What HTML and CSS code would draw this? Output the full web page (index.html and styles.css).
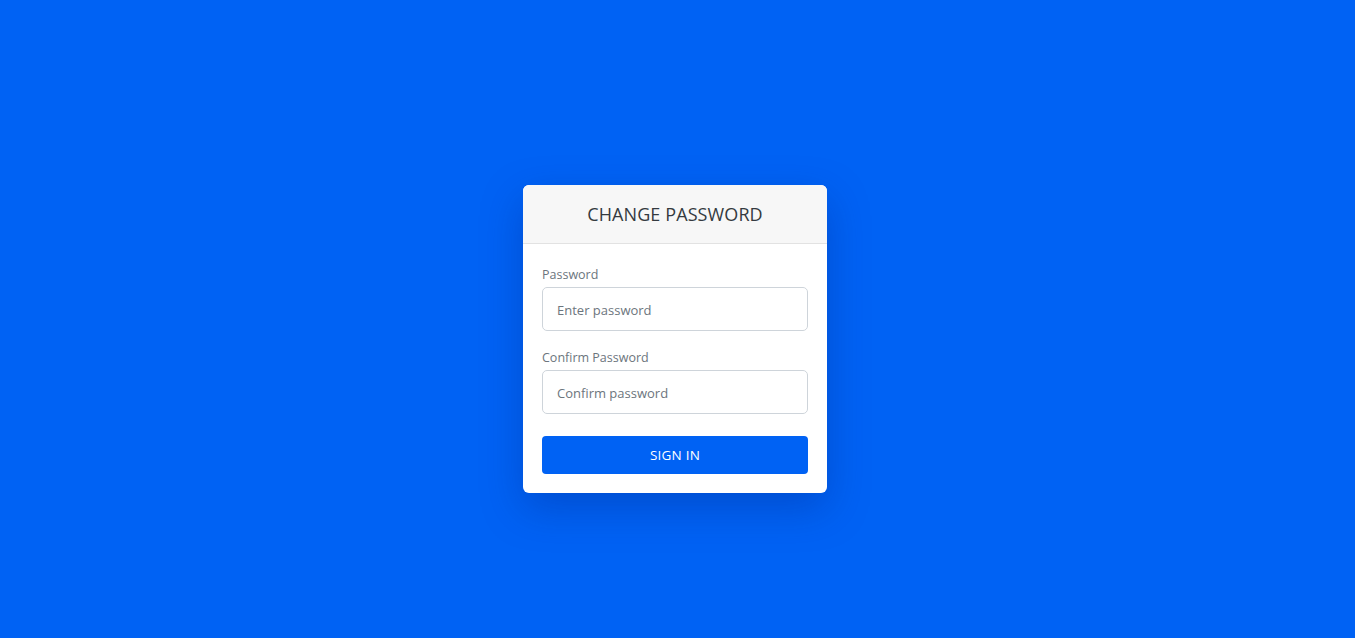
FILE: index.html
```html
<!DOCTYPE html>
<html lang="en">
<head>
<meta charset="utf-8">
<title>Change Password</title>
<link rel="stylesheet" href="styles.css">
</head>
<body>
<main class="page">
  <div class="card">
    <div class="card-header">CHANGE PASSWORD</div>
    <form class="card-body">
      <div class="form-group">
        <label class="form-label" for="pw">Password</label>
        <input class="form-input" id="pw" type="password" placeholder="Enter password">
      </div>
      <div class="form-group">
        <label class="form-label" for="cpw">Confirm Password</label>
        <input class="form-input" id="cpw" type="password" placeholder="Confirm password">
      </div>
      <button class="btn" type="button">SIGN IN</button>
    </form>
  </div>
</main>
</body>
</html>
```
FILE: styles.css
```css
* { box-sizing: border-box; }
html, body { margin: 0; height: 100%; }
body {
  background: #0062f4;
  font-family: "Open Sans", "Noto Sans", sans-serif;
  color: #343a40;
}
.page {
  height: 100%;
  display: flex;
  align-items: center;
  justify-content: center;
}
.card {
  width: 304px;
  height: 308px;
  background: #fff;
  border-radius: 6px;
  overflow: hidden;
  box-shadow: 0 15px 40px rgba(0, 40, 140, 0.35);
  margin: 40px 5px 0 0;
}
.card-header {
  height: 59px;
  background: #f7f7f7;
  border-bottom: 1px solid #e2e2e2;
  display: flex;
  align-items: center;
  justify-content: center;
  font-size: 18px;
  letter-spacing: 0.1px;
  color: #343a40;
  padding-bottom: 1px;
}
.card-body {
  padding: 21px 19px 19px;
  display: flex;
  flex-direction: column;
}
.form-group {
  display: flex;
  flex-direction: column;
  margin-bottom: 17px;
}
.form-group:last-of-type { margin-bottom: 22px; }
.form-label {
  font-size: 12.5px;
  line-height: 19px;
  height: 19px;
  color: #6c757d;
  margin-bottom: 3px;
}
.form-input {
  height: 44px;
  border: 1px solid #ced4da;
  border-radius: 5px;
  padding: 2px 14px 0;
  font-family: inherit;
  font-size: 13px;
  color: #495057;
  outline: none;
}
.form-input::placeholder { color: #6c757d; opacity: 1; }
.btn {
  height: 38px;
  border: none;
  border-radius: 4px;
  background: #0062f4;
  color: #fff;
  font-family: inherit;
  font-size: 13.5px;
  letter-spacing: 0.2px;
  padding-top: 1px;
  cursor: pointer;
}
```
